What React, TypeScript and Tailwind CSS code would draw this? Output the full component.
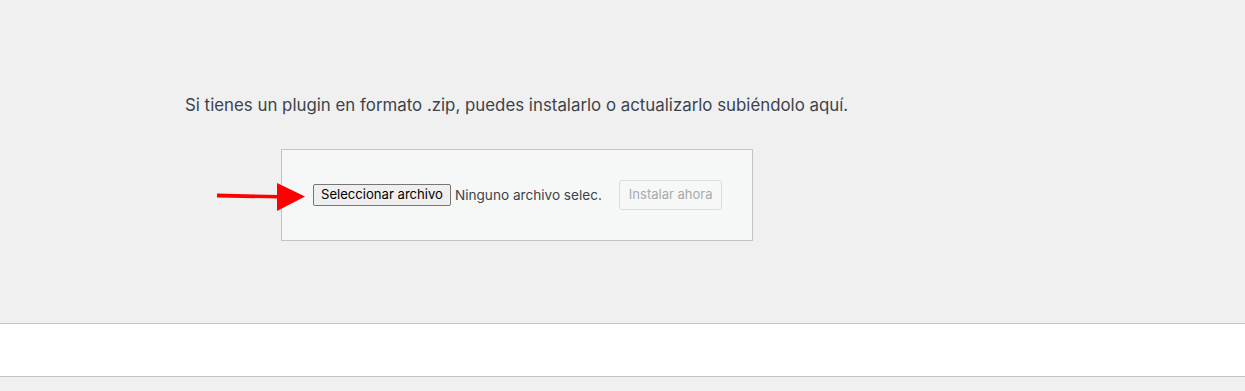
import React from 'react';

const RedArrow = () => (
  <svg
    className="absolute left-[215px] top-[181px]"
    width="94"
    height="32"
    viewBox="0 0 94 32"
  >
    <path d="M2 12.5 L64 14 L64 17.5 L2 16.5 Z" fill="#ff0000" />
    <path d="M62 2 L90 15.5 L62 30 Z" fill="#ff0000" />
  </svg>
);

export default function App() {
  return (
    <div className="relative w-[1245px] h-[391px] bg-[#f0f0f1] font-['Inter','Liberation_Sans',Arial,sans-serif] overflow-hidden">
      <div className="h-[323px] pt-[95px] pl-[185px]">
        <p className="text-[16.85px] leading-[21px] text-[#3c434a]">
          Si tienes un plugin en formato .zip, puedes instalarlo o actualizarlo subiéndolo aquí.
        </p>
        <div className="mt-[33px] ml-[96px] w-[472px] h-[92px] border border-[#c3c4c7] bg-[#f6f7f7] flex items-center pl-[31px]">
          <button
            type="button"
            className="h-[22px] px-[7px] text-[13.1px] text-black bg-[#efefef] border border-[#767676] rounded-[2px] leading-none"
          >
            Seleccionar archivo
          </button>
          <span className="ml-[4px] text-[13.6px] text-[#3c434a]">Ninguno archivo selec.</span>
          <button
            type="button"
            className="ml-[17px] h-[30px] px-[9px] text-[13px] text-[#a7aaad] bg-[#f6f7f7] border border-[#dcdcde] rounded-[3px]"
          >
            Instalar ahora
          </button>
        </div>
      </div>
      <div className="h-[54px] bg-white border-y border-[#c3c4c7]" />
      <RedArrow />
    </div>
  );
}
